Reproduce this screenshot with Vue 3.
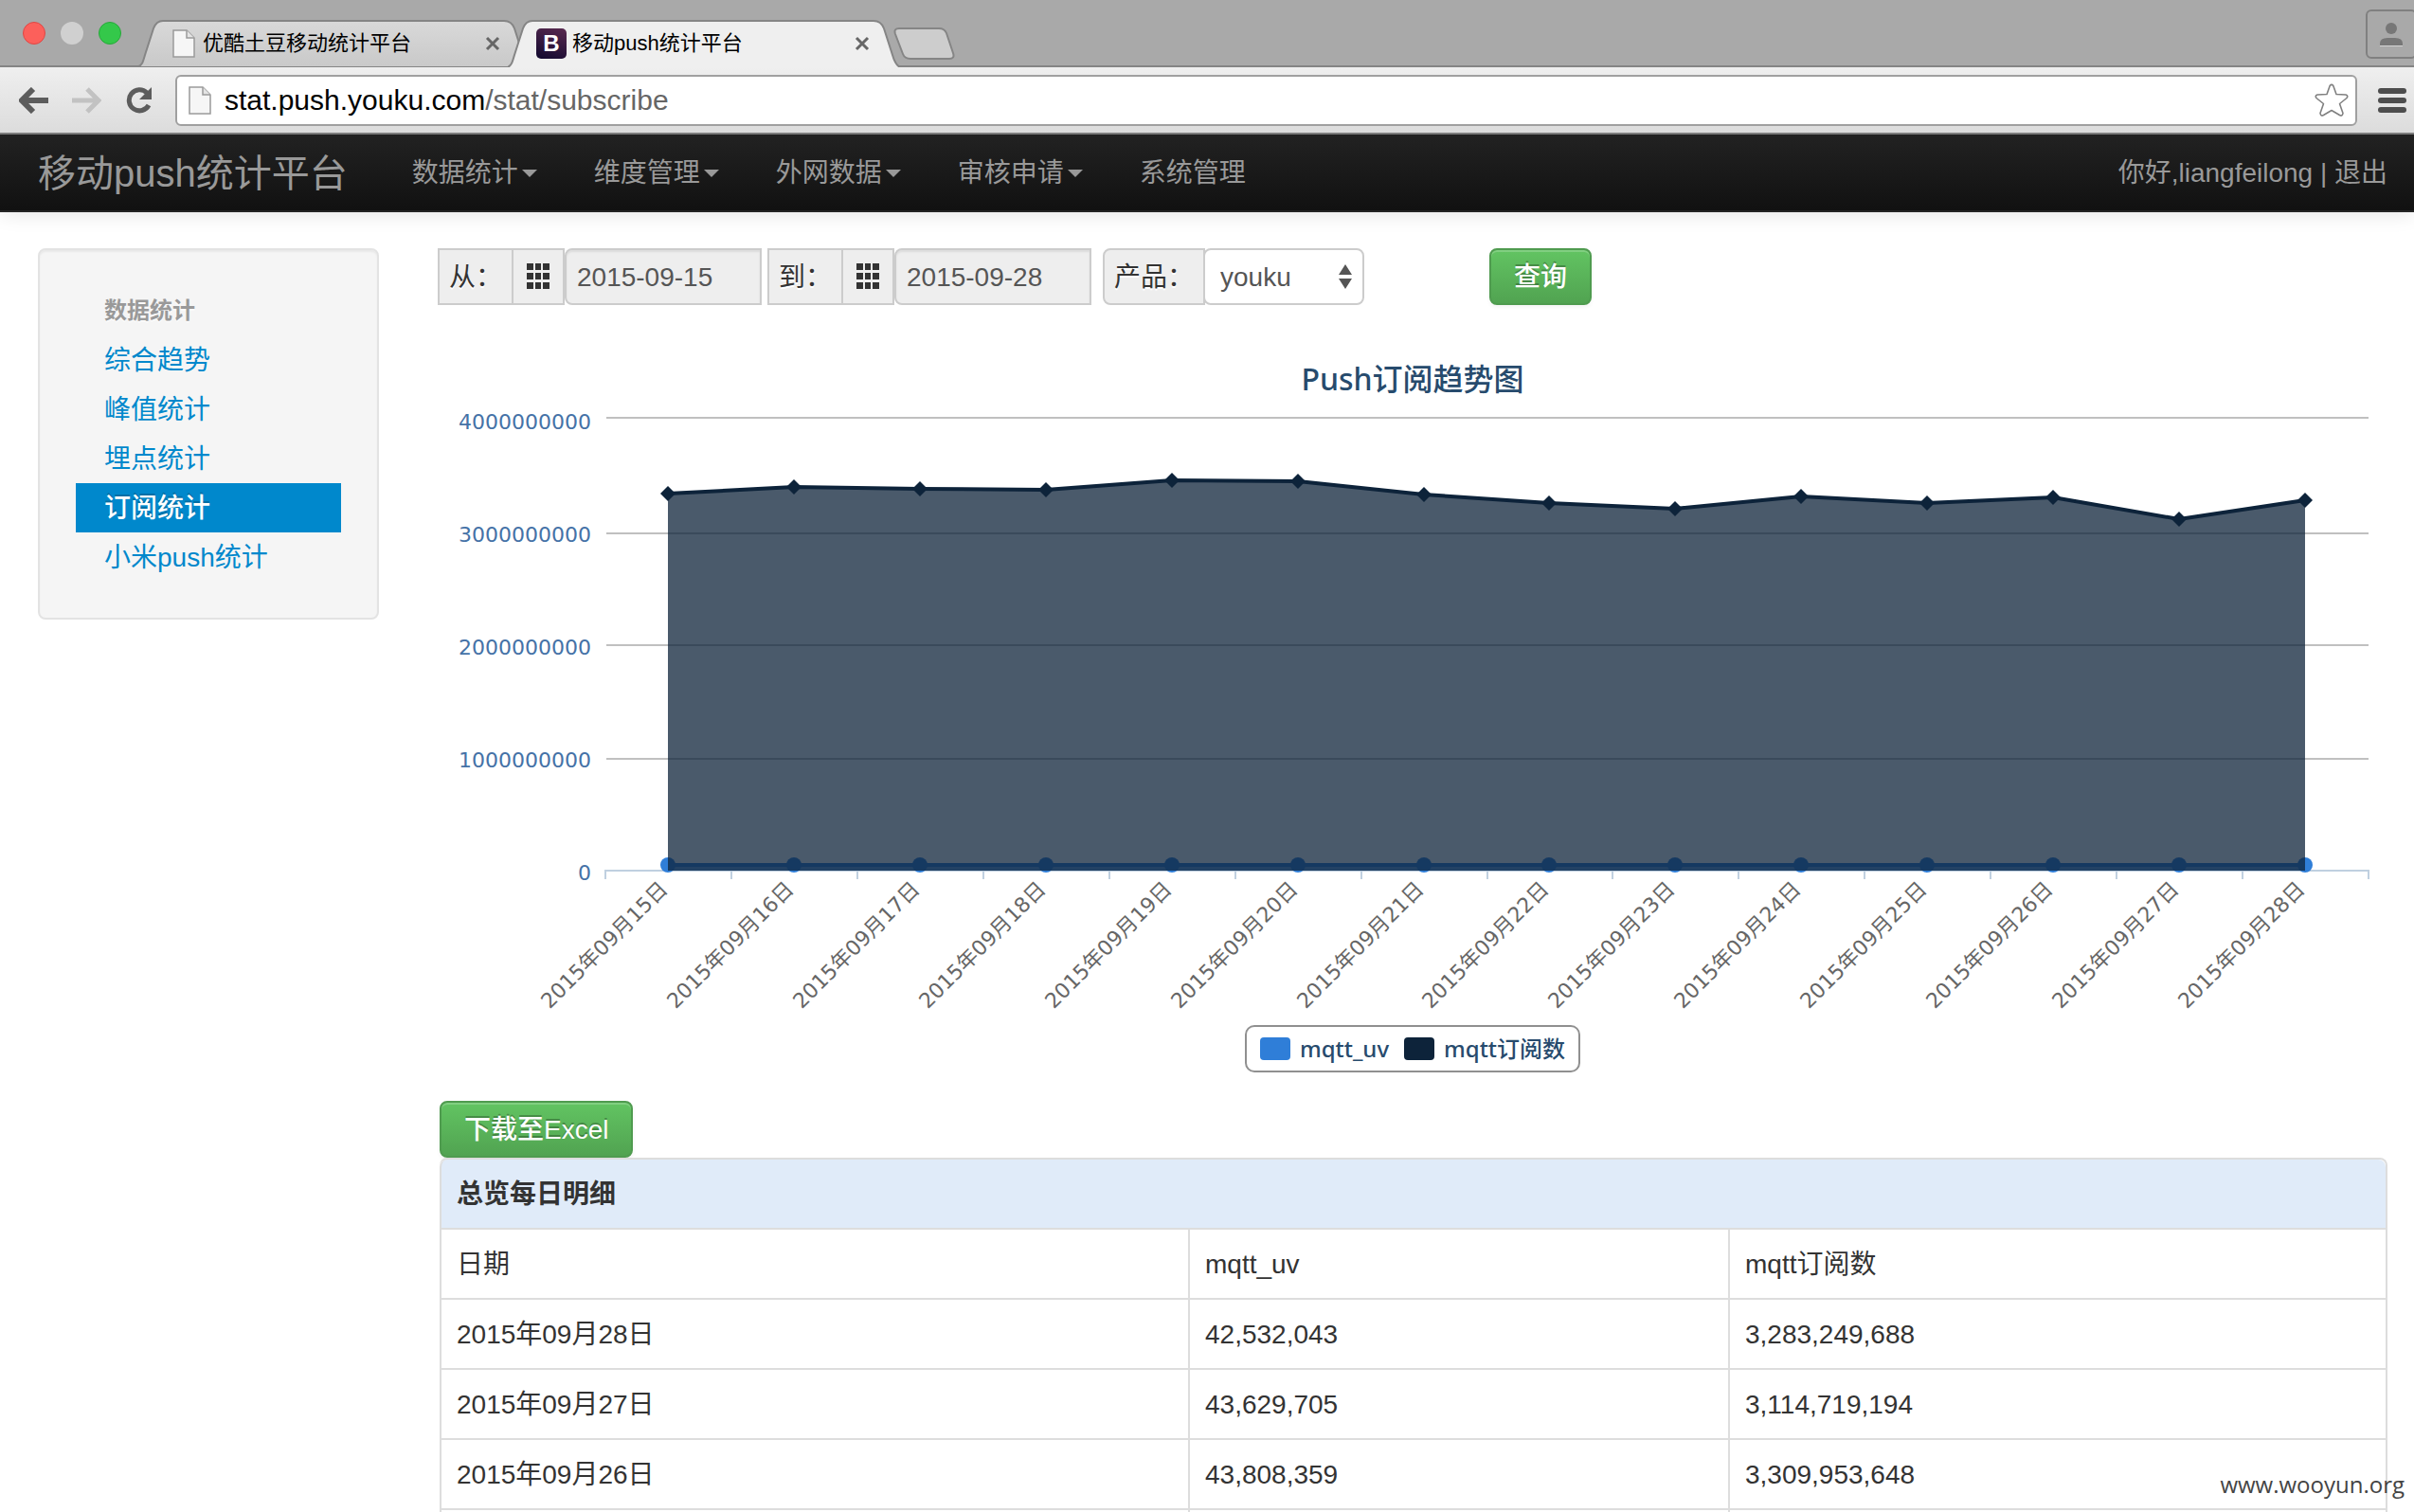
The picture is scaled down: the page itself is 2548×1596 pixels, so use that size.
<script setup>
import { ref } from 'vue'

const navItems = [
  { label: '数据统计', menu: true },
  { label: '维度管理', menu: true },
  { label: '外网数据', menu: true },
  { label: '审核申请', menu: true },
  { label: '系统管理', menu: false },
]

const sideItems = ['综合趋势', '峰值统计', '埋点统计', '订阅统计', '小米push统计']
const activeItem = ref('订阅统计')

const dateFrom = ref('2015-09-15')
const dateTo = ref('2015-09-28')
const product = ref('youku')
const address = 'stat.push.youku.com'

const rows = [
  ['2015年09月28日', '42,532,043', '3,283,249,688'],
  ['2015年09月27日', '43,629,705', '3,114,719,194'],
  ['2015年09月26日', '43,808,359', '3,309,953,648'],
]

// Chart geometry, in viewBox units
const left = 177
const right = 2038
const step = (right - left) / 14
const base = 491
const unit = 119

// Subscriptions per day, in billions
const subs = [3.345, 3.4, 3.385, 3.38, 3.46, 3.455, 3.335, 3.26, 3.21, 3.32, 3.26, 3.31, 3.115, 3.283]
const points = subs.map((v, i) => ({
  x: Math.floor(left + step * (i + 0.5)),
  y: Math.round(base - v * unit),
  label: `2015年09月${15 + i}日`,
}))
const line = points.map((p) => `${p.x},${p.y}`).join(' ')
const firstX = points[0].x
const lastX = points[points.length - 1].x
const area = `${firstX},${base} ${line} ${lastX},${base}`
const uvY = base - 6

const grid = [
  { y: 13, label: '4000000000', ly: 25 },
  { y: 135, label: '3000000000', ly: 144 },
  { y: 253, label: '2000000000', ly: 263 },
  { y: 373, label: '1000000000', ly: 382 },
]
const ticks = Array.from({ length: 15 }, (_, i) => Math.round(left + step * i))
</script>

<template>
  <div class="browser">
    <header class="tabstrip">
      <div class="lights">
        <span class="light red"></span>
        <span class="light gray"></span>
        <span class="light green"></span>
      </div>
      <div class="tab">
        <svg class="tab-shape" viewBox="0 0 414 50" preserveAspectRatio="none">
          <defs>
            <linearGradient id="tabBack" x1="0" y1="0" x2="0" y2="1">
              <stop offset="0" stop-color="#d9d9d9" /><stop offset="1" stop-color="#c9c9c9" />
            </linearGradient>
          </defs>
          <path d="M0 49 C4 48 5 44 7 37 L16 9 Q19 1 26 1 H386 Q394 1 397 9 L406 37 C408 44 410 48 414 49" fill="url(#tabBack)" stroke="#858585" stroke-width="2" />
        </svg>
        <svg class="page-icon" viewBox="0 0 24 30"><path d="M1 1h14l8 8v20H1z" fill="#f6f6f6" stroke="#9a9a9a" stroke-width="1.5" /><path d="M15 1v8h8" fill="#e4e4e4" stroke="#9a9a9a" stroke-width="1.5" /></svg>
        <span class="tab-title">优酷土豆移动统计平台</span>
        <button class="tab-close" aria-label="关闭"><svg viewBox="0 0 16 16"><path d="M2 2l12 12M14 2L2 14" stroke="#666" stroke-width="3" /></svg></button>
      </div>
      <div class="tab front">
        <svg class="tab-shape" viewBox="0 0 414 50" preserveAspectRatio="none">
          <path d="M0 50 C4 48 5 44 7 37 L16 9 Q19 1 26 1 H386 Q394 1 397 9 L406 37 C408 44 410 48 414 50" fill="#efefef" stroke="#858585" stroke-width="2" />
        </svg>
        <span class="favicon">B</span>
        <span class="tab-title">移动push统计平台</span>
        <button class="tab-close" aria-label="关闭"><svg viewBox="0 0 16 16"><path d="M2 2l12 12M14 2L2 14" stroke="#666" stroke-width="3" /></svg></button>
      </div>
      <button class="new-tab" aria-label="新标签页">
        <svg viewBox="0 0 66 34"><path d="M7 1H49Q55 1 57 6L64 27Q66 33 60 33H19Q13 33 11 28L3 7Q1 1 7 1Z" fill="#cdcdcd" stroke="#858585" stroke-width="2" /></svg>
      </button>
      <button class="profile" aria-label="用户">
        <svg viewBox="0 0 24 26"><circle cx="12" cy="7" r="6" fill="#777" /><path d="M0 25v-2q0-6 8-6h8q8 0 8 6v2z" fill="#777" /><path d="M0 25.500h24" stroke="#d4d4d4" /></svg>
      </button>
    </header>

    <div class="toolbar">
      <button class="tool" aria-label="后退">
        <svg viewBox="0 0 32 28"><path d="M15 2L3 14l12 12M4 14h27" fill="none" stroke="#5c5c5c" stroke-width="6" /></svg>
      </button>
      <button class="tool" aria-label="前进">
        <svg viewBox="0 0 32 28"><path d="M17 2l12 12-12 12M28 14H1" fill="none" stroke="#c2c2c2" stroke-width="5" /></svg>
      </button>
      <button class="tool" aria-label="刷新">
        <svg viewBox="0 0 32 28"><path d="M27 19A11 11 0 1 1 25 6" fill="none" stroke="#5c5c5c" stroke-width="5" /><path d="M30 0v13H17z" fill="#5c5c5c" /></svg>
      </button>
      <div class="omnibox">
        <svg class="page-icon" viewBox="0 0 24 30"><path d="M1 1h14l8 8v20H1z" fill="#f6f6f6" stroke="#9a9a9a" stroke-width="1.5" /><path d="M15 1v8h8" fill="#e4e4e4" stroke="#9a9a9a" stroke-width="1.5" /></svg>
        <span class="url">{{ address }}<span class="path">/stat/subscribe</span></span>
        <button class="star" aria-label="收藏">
          <svg viewBox="0 0 36 36"><path d="M16.200 2.500Q18 .2 19.800 2.500L23 11.500 33 12Q36 13 34 15.500L26.500 21.500 30 31.500Q29.500 35 26.500 33.500L18 28.500 9.500 33.500Q6.500 35 6 31.500L9.500 21.500 2 15.500Q0 13 3 12L13 11.500Z" fill="#fff" stroke="#808080" stroke-width="1.6" stroke-linejoin="round" /></svg>
        </button>
      </div>
      <button class="burger" aria-label="菜单"><i></i><i></i><i></i></button>
    </div>

    <div class="viewport">
      <nav class="navbar">
        <a class="brand" href="#">移动push统计平台</a>
        <a v-for="n in navItems" :key="n.label" class="nav-link" href="#">{{ n.label }}<b v-if="n.menu" class="caret"></b></a>
        <p class="user">你好,liangfeilong | <a href="#">退出</a></p>
      </nav>

      <div class="page">
        <aside class="well">
          <h2>数据统计</h2>
          <a v-for="s in sideItems" :key="s" href="#" :class="{ active: s === activeItem }">{{ s }}</a>
        </aside>

        <main>
          <form class="filters" @submit.prevent>
            <div class="group">
              <label class="addon text" for="from">从：</label>
              <span class="addon icon"><svg viewBox="0 0 24 28"><path d="M0 0h7v7H0zM9 0h6v7H9zM17 0h7v7h-7zM0 10h7v7H0zM9 10h6v7H9zM17 10h7v7h-7zM0 20h7v7H0zM9 20h6v7H9zM17 20h7v7h-7z" fill="#333" /></svg></span>
              <input id="from" v-model="dateFrom" type="text" readonly />
            </div>
            <div class="group">
              <label class="addon text" for="to">到：</label>
              <span class="addon icon"><svg viewBox="0 0 24 28"><path d="M0 0h7v7H0zM9 0h6v7H9zM17 0h7v7h-7zM0 10h7v7H0zM9 10h6v7H9zM17 10h7v7h-7zM0 20h7v7H0zM9 20h6v7H9zM17 20h7v7h-7z" fill="#333" /></svg></span>
              <input id="to" v-model="dateTo" type="text" readonly />
            </div>
            <div class="group product">
              <label class="addon" for="product">产品：</label>
              <div class="select">
                <select id="product" v-model="product"><option>youku</option></select>
                <svg viewBox="0 0 14 26"><path d="M7 0l7 11H0zM7 26l7-11H0z" fill="#555" /></svg>
              </div>
            </div>
            <button class="btn query" type="submit">查询</button>
          </form>

          <section class="chart">
            <h1>Push订阅趋势图</h1>
            <svg class="plot" viewBox="0 0 2058 644">
              <g v-for="g in grid" :key="g.label">
                <line :x1="left + 1" :x2="right" :y1="g.y" :y2="g.y" stroke="#c0c0c0" stroke-width="2" />
                <text class="y-label" x="162" :y="g.ly" text-anchor="end">{{ g.label }}</text>
              </g>
              <text class="y-label" x="162" y="501" text-anchor="end">0</text>
              <g stroke="#c0d0e0" stroke-width="2">
                <line :x1="left - 1" :x2="right + 1" :y1="base" :y2="base" />
                <line v-for="t in ticks" :key="t" :x1="t" :x2="t" :y1="base" :y2="base + 9" />
              </g>
              <polygon :points="`${firstX},${base} ${firstX},${uvY} ${lastX},${uvY} ${lastX},${base}`" fill="#2f7ed8" fill-opacity=".75" />
              <line :x1="firstX" :x2="lastX" :y1="uvY" :y2="uvY" stroke="#2f7ed8" stroke-width="4" />
              <circle v-for="p in points" :key="p.label" :cx="p.x" :cy="uvY" r="8" fill="#2f7ed8" />
              <polygon :points="area" fill="#0d233a" fill-opacity=".75" />
              <polyline :points="line" fill="none" stroke="#0d233a" stroke-width="4" stroke-linejoin="round" />
              <path v-for="p in points" :key="p.label" :d="`M${p.x} ${p.y - 8}l8 8-8 8-8-8z`" fill="#0d233a" />
              <text v-for="p in points" :key="p.label" class="x-label" text-anchor="end" :transform="`translate(${p.x + 1} 512) rotate(-45)`">{{ p.label }}</text>
            </svg>
            <div class="legend">
              <span class="key uv"></span><span>mqtt_uv</span>
              <span class="key sub"></span><span>mqtt订阅数</span>
            </div>
          </section>

          <section class="detail">
            <button class="btn" type="button">下载至Excel</button>
            <table>
              <colgroup><col class="c1" /><col class="c2" /><col class="c3" /></colgroup>
              <thead>
                <tr><th colspan="3">总览每日明细</th></tr>
              </thead>
              <tbody>
                <tr><td>日期</td><td>mqtt_uv</td><td>mqtt订阅数</td></tr>
                <tr v-for="r in rows" :key="r[0]"><td v-for="c in r" :key="c">{{ c }}</td></tr>
                <tr><td></td><td></td><td></td></tr>
              </tbody>
            </table>
          </section>
        </main>
      </div>
    </div>
    <span class="watermark">www.wooyun.org</span>
  </div>
</template>

<style>
body {
  margin: 0;
  background: #fff;
}
</style>

<style scoped>
* {
  box-sizing: border-box;
}
.browser {
  position: relative;
  display: flex;
  flex-direction: column;
  height: 100vh;
  overflow: hidden;
  font: 28px/40px "Liberation Sans", "Noto Sans CJK SC", sans-serif;
  color: #333;
}
button {
  font: inherit;
  padding: 0;
  border: 0;
  background: none;
}
a {
  text-decoration: none;
}
svg {
  display: block;
}
.tabstrip {
  display: flex;
  align-items: flex-end;
  height: 71px;
  padding-left: 24px;
  background: #a9a9a9;
  border-bottom: 2px solid #858585;
  flex: none;
}
.lights {
  display: flex;
  gap: 16px;
  align-self: center;
  margin-right: 18px;
}
.light {
  width: 24px;
  height: 24px;
  border-radius: 50%;
}
.red {
  background: #fc605b;
  border: 1px solid #df4744;
}
.gray {
  background: #d0d0d0;
}
.green {
  background: #34c84a;
  border: 1px solid #27a83a;
}
.tab {
  position: relative;
  display: flex;
  align-items: center;
  width: 414px;
  height: 50px;
  padding: 0 32px 0 36px;
  margin-bottom: -2px;
}
.front {
  margin-left: -24px;
  padding-left: 30px;
}
.tab-shape {
  position: absolute;
  inset: 0;
  width: 100%;
  height: 100%;
}
.page-icon {
  position: relative;
  width: 24px;
  height: 30px;
  flex: none;
}
.tab-title {
  position: relative;
  flex: 1;
  padding-left: 8px;
  font-size: 22px;
  line-height: 32px;
  color: #000;
}
.front .tab-title {
  padding-left: 6px;
}
.tab-close {
  position: relative;
  width: 16px;
  height: 16px;
}
.favicon {
  position: relative;
  width: 32px;
  height: 32px;
  border-radius: 5px;
  background: linear-gradient(20deg, #10082e, #5a2a50);
  color: #fff;
  font-size: 24px;
  font-weight: bold;
  line-height: 32px;
  text-align: center;
}
.new-tab {
  width: 66px;
  height: 34px;
  margin: 0 0 6px -8px;
}
.profile {
  display: flex;
  justify-content: center;
  align-items: center;
  width: 54px;
  height: 52px;
  margin: 0 -3px 7px auto;
  border: 2px solid #808080;
  border-radius: 6px;
}
.profile svg {
  width: 24px;
  height: 26px;
}
.toolbar {
  display: flex;
  align-items: center;
  height: 71px;
  padding: 0 8px 0 20px;
  background: linear-gradient(#efefef, #dcdcdc);
  border-bottom: 2px solid #7c7c7c;
  flex: none;
}
.tool {
  width: 32px;
  height: 28px;
  margin-right: 23px;
}
.omnibox {
  display: flex;
  align-items: center;
  flex: 1;
  height: 54px;
  padding: 0 7px 0 12px;
  border: 2px solid #a0a0a0;
  border-radius: 6px;
  background: #fff;
}
.url {
  flex: 1;
  padding-left: 14px;
  font-size: 30px;
  color: #000;
}
.path {
  color: #666;
}
.star {
  width: 36px;
  height: 36px;
}
.burger {
  display: grid;
  gap: 4px;
  width: 30px;
  margin-left: 22px;
}
.burger i {
  height: 6px;
  border-radius: 3px;
  background: #4d4d4d;
}
.viewport {
  flex: 1;
  min-height: 0;
  overflow: hidden;
}
.navbar {
  display: flex;
  align-items: center;
  height: 82px;
  padding: 2px 28px 0 40px;
  background: linear-gradient(#222, #111);
  border-bottom: 2px solid #252525;
  box-shadow: 0 2px 20px rgba(0, 0, 0, 0.1);
  color: #999;
}
.navbar a {
  color: #999;
}
.brand {
  margin-right: 38px;
  font-size: 40px;
}
.nav-link {
  display: flex;
  align-items: center;
  padding: 0 30px;
}
.caret {
  margin-left: 4px;
  border: 8px solid transparent;
  border-top-color: #999;
  border-bottom: 0;
}
.user {
  margin: 0 0 0 auto;
}
.page {
  display: flex;
  align-items: flex-start;
  gap: 62px;
  padding: 38px 28px 0 40px;
}
.well {
  width: 360px;
  padding: 38px;
  border: 2px solid #e3e3e3;
  border-radius: 8px;
  background: #f5f5f5;
  box-shadow: inset 0 2px 2px rgba(0, 0, 0, 0.05);
  flex: none;
}
.well h2 {
  margin: 0;
  padding: 6px 30px;
  font-size: 24px;
  line-height: 40px;
  color: #999;
  text-shadow: 0 2px 0 rgba(255, 255, 255, 0.5);
}
.well a {
  display: block;
  padding: 7px 30px 5px;
  color: #08c;
}
.well .active {
  background: #08c;
  color: #fff;
  font-weight: 500;
  text-shadow: 0 -2px 0 rgba(0, 0, 0, 0.2);
}
main {
  flex: 1;
  min-width: 0;
}
.filters {
  display: flex;
  height: 60px;
}
.group {
  display: flex;
  margin-right: 6px;
}
.addon {
  padding: 9px 10px 7px;
  border: 2px solid #ccc;
  background: #eee;
  text-shadow: 0 2px 0 #fff;
  white-space: nowrap;
}
.addon.text {
  width: 80px;
}
.addon.icon {
  display: flex;
  align-items: center;
  width: 56px;
  padding: 0 14px;
  margin-left: -2px;
}
.addon.icon svg {
  width: 24px;
  height: 28px;
}
.group input {
  width: 208px;
  padding: 2px 11px 0;
  border: 2px solid #ccc;
  border-radius: 8px 0 0 8px;
  background: #eee;
  box-shadow: inset 0 2px 2px rgba(0, 0, 0, 0.075);
  font: inherit;
  color: #555;
}
.product {
  margin: 0 132px 0 6px;
}
.product .addon {
  width: 108px;
  border-radius: 8px 0 0 8px;
}
.select {
  position: relative;
  margin-left: -2px;
}
.select select {
  width: 170px;
  height: 60px;
  padding: 2px 16px 0;
  border: 2px solid #ccc;
  border-radius: 8px;
  background: #fff;
  font: inherit;
  color: #555;
  appearance: none;
}
.select svg {
  position: absolute;
  right: 13px;
  top: 17px;
  width: 14px;
  height: 26px;
}
.btn {
  height: 60px;
  padding: 2px 24px 0;
  border: 2px solid #4f9b4f;
  border-radius: 8px;
  background: linear-gradient(#62c462, #51a351);
  box-shadow: inset 0 2px 0 rgba(255, 255, 255, 0.2), 0 2px 4px rgba(0, 0, 0, 0.05);
  color: #fff;
  font-weight: 500;
  text-shadow: 0 -2px 0 rgba(0, 0, 0, 0.25);
}
.chart h1 {
  margin: 58px 0 8px;
  font: 500 32px/40px "Noto Sans", "Noto Sans CJK SC", sans-serif;
  color: #274b6d;
  text-align: center;
}
.plot {
  width: 100%;
  height: auto;
}
.y-label {
  font: 22px "DejaVu Sans", sans-serif;
  fill: #4572a7;
}
.x-label {
  font: 22px "DejaVu Sans", "Noto Sans CJK SC", sans-serif;
  fill: #666;
}
.legend {
  display: flex;
  align-items: center;
  width: max-content;
  height: 50px;
  margin: 10px auto 0;
  padding: 0 14px;
  border: 2px solid #909090;
  border-radius: 10px;
  font: 500 24px/34px "Noto Sans", "Noto Sans CJK SC", sans-serif;
  color: #274b6d;
}
.key {
  width: 32px;
  height: 24px;
  margin-right: 10px;
  border-radius: 4px;
}
.uv {
  background: #2f7ed8;
}
.sub {
  margin-left: 16px;
  background: #0d233a;
}
.detail {
  padding: 30px 0 0 2px;
}
.detail .btn {
  display: block;
}
table {
  width: 100%;
  table-layout: fixed;
  border-collapse: separate;
  border-spacing: 0;
  border: 2px solid #ddd;
  border-left: 0;
  border-radius: 8px;
}
.c1 {
  width: 790px;
}
.c2 {
  width: 570px;
}
th,
td {
  height: 74px;
  padding: 17px 16px 15px;
  border-left: 2px solid #ddd;
  line-height: 40px;
  text-align: left;
}
th {
  height: 72px;
  border-radius: 8px 8px 0 0;
  background: #e0ebf9;
}
td {
  border-top: 2px solid #ddd;
}
.watermark {
  position: absolute;
  right: 10px;
  bottom: 12px;
  font: 24px/34px "Open Sans", sans-serif;
  color: #444;
}
</style>
